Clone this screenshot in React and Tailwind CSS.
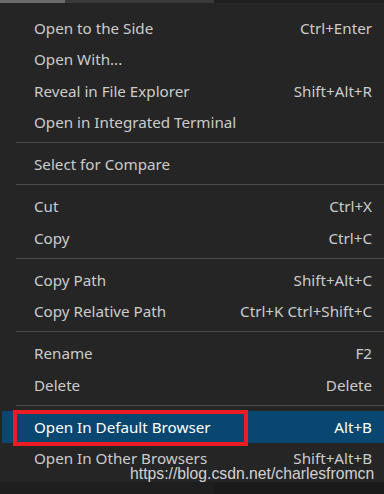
const groups = [
  [
    ["Open to the Side", "Ctrl+Enter"],
    ["Open With...", ""],
    ["Reveal in File Explorer", "Shift+Alt+R"],
    ["Open in Integrated Terminal", ""],
  ],
  [["Select for Compare", ""]],
  [
    ["Cut", "Ctrl+X"],
    ["Copy", "Ctrl+C"],
  ],
  [
    ["Copy Path", "Shift+Alt+C"],
    ["Copy Relative Path", "Ctrl+K Ctrl+Shift+C"],
  ],
  [
    ["Rename", "F2"],
    ["Delete", "Delete"],
  ],
  [
    ["Open In Default Browser", "Alt+B", true],
    ["Open In Other Browsers", "Shift+Alt+B"],
  ],
];

function Item({ label, keys, active }) {
  return (
    <div
      className={
        "relative flex items-center justify-between h-[31.5px] ml-[2px] pl-[32px] pr-[12px] " +
        (active ? "bg-[#094771] text-white" : "text-[#cccccc]")
      }
    >
      <span className="pt-[1px]">{label}</span>
      <span className="pt-[1px]">{keys}</span>
      {active && (
        <div className="absolute left-[11px] top-[-1px] w-[235px] h-[36px] border-[4px] border-[#ec1c24]" />
      )}
    </div>
  );
}

export default function App() {
  return (
    <div className="relative w-[384px] h-[494px] overflow-hidden bg-[#1e1e1e] font-['Noto_Sans',sans-serif] text-[15.2px]">
      {/* strip of the window behind the menu */}
      <div className="flex h-[3px]">
        <div className="w-[65px] bg-[#6b6b6b]" />
        <div className="w-[149px] bg-[#3a3a3a]" />
        <div className="flex-1 bg-[#1f1f1f]" />
      </div>
      <div className="bg-[#252526] pt-[9px] pb-[8px]">
        {groups.map((g, gi) => (
          <div key={gi}>
            {gi > 0 && (
              <div className="h-[10.5px] pt-[4px]">
                <div className="ml-[16px] h-px bg-[#4b4b4b]" />
              </div>
            )}
            {g.map(([label, keys, active]) => (
              <Item key={label} label={label} keys={keys} active={active} />
            ))}
          </div>
        ))}
      </div>
      <div className="flex h-full">
        <div className="w-[214px] bg-[#1e1e1e]" />
        <div className="flex-1 bg-[#1a1a1a]" />
      </div>
      <div className="absolute left-[130px] top-[464px] font-['Liberation_Sans',sans-serif] text-[15.75px] leading-[20px] text-[#d2d2d2]">
        https://blog.csdn.net/charlesfromcn
      </div>
    </div>
  );
}
